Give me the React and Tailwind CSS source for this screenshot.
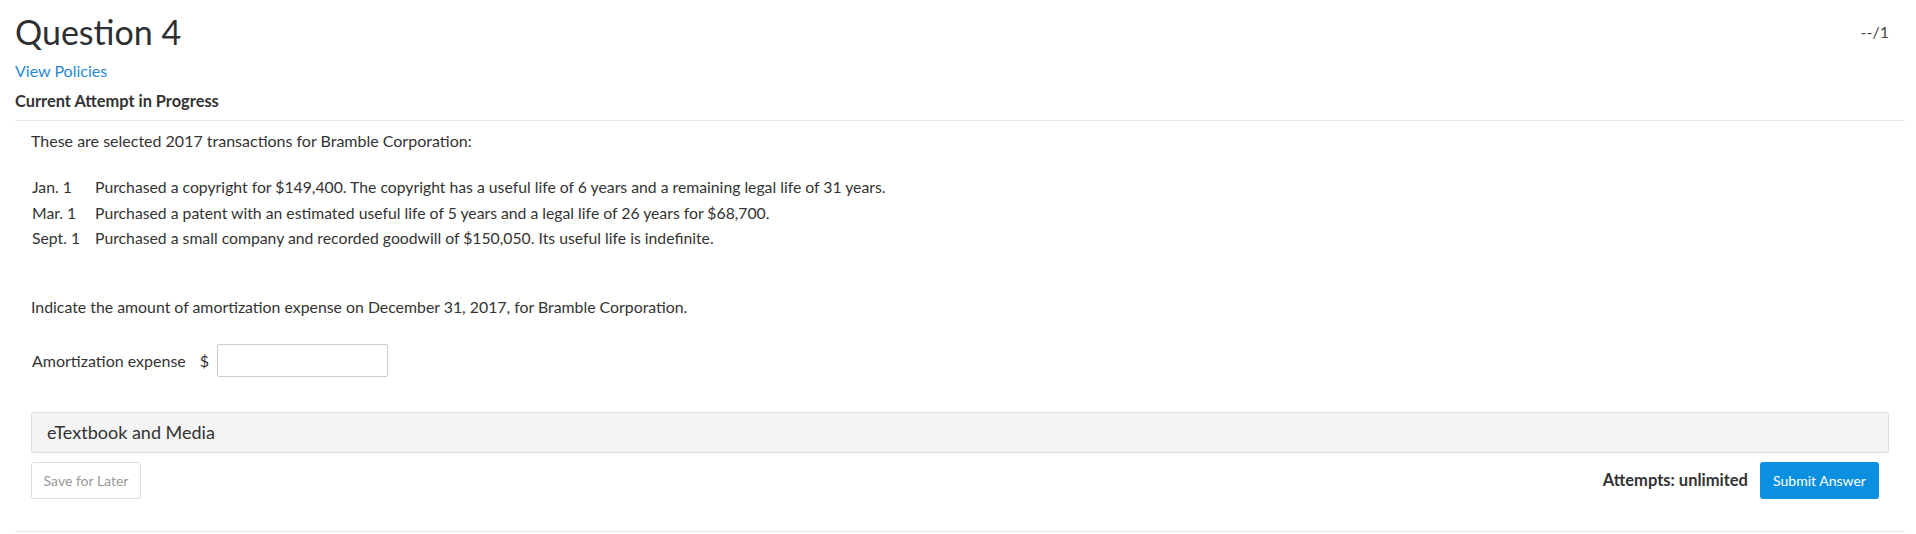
export default function App() {
  const rows = [
    ["Jan. 1", "Purchased a copyright for $149,400. The copyright has a useful life of 6 years and a remaining legal life of 31 years."],
    ["Mar. 1", "Purchased a patent with an estimated useful life of 5 years and a legal life of 26 years for $68,700."],
    ["Sept. 1", "Purchased a small company and recorded goodwill of $150,050. Its useful life is indefinite."],
  ];
  return (
    <div className="bg-white pl-[15px] pr-[11px] text-[#333333] h-[534px]" style={{ fontFamily: "Lato, 'Open Sans', sans-serif" }}>
      <div className="pt-[11px] pr-[16px] flex justify-between items-start">
        <h1 className="text-[34px] leading-[41px] font-normal text-[#2d3033]">Question 4</h1>
        <span className="mt-[11px] text-[16px] leading-[19px] text-[#444]">--/1</span>
      </div>
      <div className="mt-[9px] text-[16px] leading-[19px] text-[#2a8ad4]">View Policies</div>
      <div className="mt-[11px] text-[16.4px] leading-[19px] font-bold text-[#333]">Current Attempt in Progress</div>
      <div className="mt-[10px] border-t border-[#e6e6e6]" />
      <div className="pl-[16px] pr-[16px]">
        <p className="mt-[10px] text-[16px] leading-[19px]">These are selected 2017 transactions for Bramble Corporation:</p>
        <div className="mt-[24px] text-[15.75px] leading-[25.5px]">
          {rows.map(([d, t]) => (
            <div key={d} className="flex">
              <span className="w-[64px] pl-[1px] shrink-0">{d}</span>
              <span>{t}</span>
            </div>
          ))}
        </div>
        <p className="mt-[46px] text-[15.85px] leading-[19px]">Indicate the amount of amortization expense on December 31, 2017, for Bramble Corporation.</p>
        <div className="mt-[28px] flex items-center text-[16px] leading-[19px]">
          <span className="pl-[1px]">Amortization expense</span>
          <span className="ml-[14px]">$</span>
          <input type="text" className="ml-[8px] w-[171px] h-[33px] border border-[#cccccc] rounded-[2px] outline-none" />
        </div>
        <div className="mt-[35px] h-[41px] bg-[#f4f4f4] border border-[#dddddd] rounded-[3px] pl-[15px] text-[18px] leading-[39px] text-[#333]">
          eTextbook and Media
        </div>
        <div className="mt-[9px] flex items-center justify-between pr-[10px]">
          <button className="h-[37px] w-[110px] border border-[#dddddd] rounded-[3px] bg-white text-[14px] text-[#999999]">Save for Later</button>
          <div className="flex items-center">
            <span className="text-[16.5px] font-bold text-[#333]">Attempts: unlimited</span>
            <button className="ml-[12px] h-[37px] w-[119px] rounded-[3px] bg-[#0b8fe0] text-[14px] text-white">Submit Answer</button>
          </div>
        </div>
      </div>
      <div className="mt-[32px] border-t border-[#e6e6e6]" />
    </div>
  );
}
